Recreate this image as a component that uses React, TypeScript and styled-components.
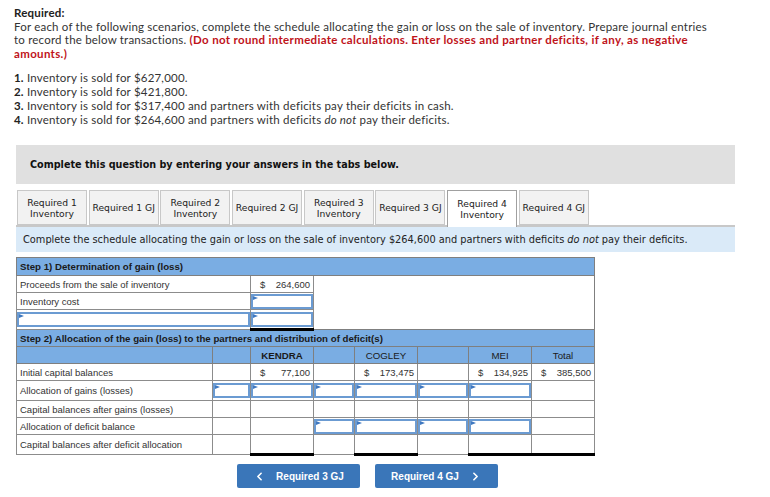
import styled, { createGlobalStyle } from "styled-components";
import { ChevronLeft, ChevronRight } from "lucide-react";

const GlobalStyle = createGlobalStyle`
  body {
    margin: 0;
    background: #fff;
  }
`;

const Page = styled.div`
  width: 770px;
  padding-top: 6px;
`;

const Intro = styled.div`
  padding-left: 14px;
  font-family: Lato, "Open Sans", sans-serif;
  font-size: 11.5px;
  letter-spacing: 0.2px;
  line-height: 13.5px;
  color: #333;
  white-space: nowrap;
`;

const Heading = styled.div`
  font-weight: 700;
  color: #222;
`;

const Warn = styled.span`
  font-weight: 700;
  letter-spacing: 0.33px;
  color: #c0131a;
`;

const List = styled.ol`
  list-style: none;
  margin: 11px 0 0;
  padding: 0;
  line-height: 14px;
`;

const Num = styled.b`
  color: #222;
`;

const Question = styled.div`
  margin: 18px 0 0 16px;
  width: 719px;
`;

const Banner = styled.div`
  background: #e0e0e0;
  height: 39px;
  padding-left: 14px;
  display: flex;
  align-items: center;
  font-family: "DejaVu Sans", Verdana, sans-serif;
  font-weight: 700;
  font-size: 9.65px;
  color: #111;
`;

const Tabs = styled.div`
  display: flex;
  gap: 1.7px;
  margin-top: 6px;
  padding-left: 1px;
  position: relative;
  z-index: 1;
`;

const Tab = styled.div<{ $active?: boolean }>`
  width: 70px;
  height: ${(p) => (p.$active ? 37 : 35)}px;
  margin-bottom: ${(p) => (p.$active ? -2 : 0)}px;
  box-sizing: border-box;
  border: 1px solid ${(p) => (p.$active ? "#a0a0a0" : "#c8c8c8")};
  border-bottom: ${(p) => (p.$active ? "none" : "1px solid #c8c8c8")};
  background: ${(p) => (p.$active ? "#fff" : "#f2f2f2")};
  display: flex;
  align-items: center;
  justify-content: center;
  text-align: center;
  font-family: "DejaVu Sans", Verdana, sans-serif;
  font-size: 9.2px;
  line-height: 11px;
  color: #222;
  white-space: nowrap;
`;

const Instruction = styled.div`
  border-top: 2px solid #c8c8c8;
  background: #daeaf8;
  height: 25px;
  padding-left: 7px;
  display: flex;
  align-items: center;
  font-family: "DejaVu Sans", Verdana, sans-serif;
  font-size: 9.8px;
  color: #222;
  white-space: nowrap;
`;

const Sheet = styled.table`
  margin-top: 5px;
  width: 578px;
  border-collapse: collapse;
  table-layout: fixed;
  border: 1px solid #7f7f7f;
  font-family: "Liberation Sans", Arial, sans-serif;
  font-size: 9.5px;
  color: #333;
`;

const Row = styled.tr<{ $h: number }>`
  height: ${(p) => p.$h}px;
`;

const HeadCell = styled.td<{ $center?: boolean; $bold?: boolean }>`
  background: #7aade3;
  border: 1px solid #7f7f7f;
  padding: 0 3px;
  font-size: 9.7px;
  font-weight: ${(p) => (p.$bold ? 700 : 400)};
  text-align: ${(p) => (p.$center ? "center" : "left")};
  color: #1a1a1a;
  white-space: nowrap;
`;

const Cell = styled.td<{ $top?: boolean; $bottom?: boolean; $open?: boolean }>`
  border: 1px solid #8c8c8c;
  border-top: ${(p) => (p.$top ? "1px solid #000" : undefined)};
  border-bottom: ${(p) => (p.$bottom ? "3px solid #000" : undefined)};
  padding: 0 3px;
  white-space: nowrap;
  overflow: hidden;
  ${(p) => p.$open && "border-top: none; border-bottom: none; border-right: 1px solid #7f7f7f;"}
`;

const InputCell = styled.td<{ $top?: boolean; $bottom?: boolean }>`
  border: 1px solid #8c8c8c;
  border-top: ${(p) => (p.$top ? "1px solid #000" : undefined)};
  border-bottom: ${(p) => (p.$bottom ? "3px solid #000" : undefined)};
  padding: 0;
`;

const Field = styled.div`
  position: relative;
  height: 100%;
  min-height: 15px;
  box-sizing: border-box;
  border: 2px solid #6b9bd2;
  background: #fff;
  &::before {
    content: "";
    position: absolute;
    left: 0;
    top: 0;
    border-left: 5px solid #3f78c0;
    border-top: 2.5px solid transparent;
    border-bottom: 2.5px solid transparent;
  }
`;

const Amount = styled.div`
  display: flex;
  justify-content: space-between;
  padding-left: 6px;
`;

const Nav = styled.div`
  display: flex;
  gap: 15px;
  margin: 8px 0 0 221px;
`;

const NavButton = styled.button`
  width: 123px;
  height: 24px;
  border: none;
  border-radius: 2px;
  background: #3a76b9;
  color: #fff;
  display: flex;
  align-items: center;
  justify-content: center;
  gap: 10px;
  font-family: "Liberation Sans", Arial, sans-serif;
  font-weight: 700;
  font-size: 10px;
  padding: 0;
`;

const tabs = [
  "Required 1 Inventory",
  "Required 1 GJ",
  "Required 2 Inventory",
  "Required 2 GJ",
  "Required 3 Inventory",
  "Required 3 GJ",
  "Required 4 Inventory",
  "Required 4 GJ",
];

function Money({ v }: { v: string }) {
  return (
    <Amount>
      <span>$</span>
      <span>{v}</span>
    </Amount>
  );
}

function In({ top, bottom, span }: { top?: boolean; bottom?: boolean; span?: number }) {
  return (
    <InputCell $top={top} $bottom={bottom} colSpan={span}>
      <Field />
    </InputCell>
  );
}

export default function App() {
  return (
    <Page>
      <GlobalStyle />
      <Intro>
        <Heading>Required:</Heading>
        <div>
          For each of the following scenarios, complete the schedule allocating the gain or loss on
          the sale of inventory. Prepare journal entries
          <br />
          to record the below transactions.{" "}
          <Warn>
            (Do not round intermediate calculations. Enter losses and partner deficits, if any, as
            negative
            <br />
            amounts.)
          </Warn>
        </div>
        <List>
          <li>
            <Num>1.</Num> Inventory is sold for $627,000.
          </li>
          <li>
            <Num>2.</Num> Inventory is sold for $421,800.
          </li>
          <li>
            <Num>3.</Num> Inventory is sold for $317,400 and partners with deficits pay their
            deficits in cash.
          </li>
          <li>
            <Num>4.</Num> Inventory is sold for $264,600 and partners with deficits <i>do not</i>{" "}
            pay their deficits.
          </li>
        </List>
      </Intro>

      <Question>
        <Banner>Complete this question by entering your answers in the tabs below.</Banner>
        <Tabs>
          {tabs.map((t, i) => (
            <Tab key={t} $active={i === 6}>
              {t.endsWith("Inventory") ? (
                <span>
                  {t.replace(" Inventory", "")}
                  <br />
                  Inventory
                </span>
              ) : (
                t
              )}
            </Tab>
          ))}
        </Tabs>
        <Instruction>
          <span>
            Complete the schedule allocating the gain or loss on the sale of inventory $264,600 and
            partners with deficits <i>do not</i> pay their deficits.
          </span>
        </Instruction>

        <Sheet>
          <colgroup>
            <col style={{ width: 196 }} />
            <col style={{ width: 38 }} />
            <col style={{ width: 63 }} />
            <col style={{ width: 41 }} />
            <col style={{ width: 63 }} />
            <col style={{ width: 51 }} />
            <col style={{ width: 63 }} />
            <col style={{ width: 63 }} />
          </colgroup>
          <tbody>
            <Row $h={18}>
              <HeadCell colSpan={8} $bold>
                Step 1) Determination of gain (loss)
              </HeadCell>
            </Row>
            <Row $h={17}>
              <Cell colSpan={2}>Proceeds from the sale of inventory</Cell>
              <Cell>
                <Money v="264,600" />
              </Cell>
              <Cell colSpan={5} $open />
            </Row>
            <Row $h={17}>
              <Cell colSpan={2}>Inventory cost</Cell>
              <In />
              <Cell colSpan={5} $open />
            </Row>
            <Row $h={20}>
              <In span={2} />
              <In top bottom />
              <Cell colSpan={5} $open />
            </Row>
            <Row $h={17}>
              <HeadCell colSpan={8} $bold>
                Step 2) Allocation of the gain (loss) to the partners and distribution of deficit(s)
              </HeadCell>
            </Row>
            <Row $h={17}>
              <HeadCell />
              <HeadCell />
              <HeadCell $center $bold>
                KENDRA
              </HeadCell>
              <HeadCell />
              <HeadCell $center>COGLEY</HeadCell>
              <HeadCell />
              <HeadCell $center>MEI</HeadCell>
              <HeadCell $center>Total</HeadCell>
            </Row>
            <Row $h={17}>
              <Cell>Initial capital balances</Cell>
              <Cell />
              <Cell>
                <Money v="77,100" />
              </Cell>
              <Cell />
              <Cell>
                <Money v="173,475" />
              </Cell>
              <Cell />
              <Cell>
                <Money v="134,925" />
              </Cell>
              <Cell>
                <Money v="385,500" />
              </Cell>
            </Row>
            <Row $h={20}>
              <Cell>Allocation of gains (losses)</Cell>
              <In />
              <In />
              <In />
              <In />
              <In />
              <In />
              <Cell />
            </Row>
            <Row $h={17}>
              <Cell>Capital balances after gains (losses)</Cell>
              <Cell />
              <Cell />
              <Cell />
              <Cell />
              <Cell />
              <Cell />
              <Cell />
            </Row>
            <Row $h={17}>
              <Cell>Allocation of deficit balance</Cell>
              <Cell />
              <Cell />
              <In />
              <In />
              <In />
              <In />
              <Cell />
            </Row>
            <Row $h={20}>
              <Cell>Capital balances after deficit allocation</Cell>
              <Cell />
              <Cell $top $bottom />
              <Cell />
              <Cell $top $bottom />
              <Cell />
              <Cell $top $bottom />
              <Cell $top $bottom />
            </Row>
          </tbody>
        </Sheet>

        <Nav>
          <NavButton>
            <ChevronLeft size={13} strokeWidth={3} />
            Required 3 GJ
          </NavButton>
          <NavButton>
            Required 4 GJ
            <ChevronRight size={13} strokeWidth={3} />
          </NavButton>
        </Nav>
      </Question>
    </Page>
  );
}
